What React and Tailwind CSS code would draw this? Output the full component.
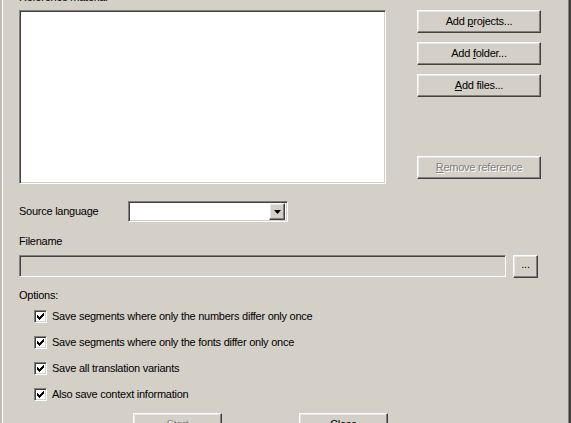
import React from "react"

const raised =
  "border border-t-white border-l-white border-r-[#404040] border-b-[#404040] shadow-[inset_-1px_-1px_0_#808080,inset_1px_1px_0_#e8e6e0] bg-[#d4d0c8]"
const sunken =
  "border border-t-[#808080] border-l-[#808080] border-r-white border-b-white shadow-[inset_1px_1px_0_#404040,inset_-1px_-1px_0_#d4d0c8]"

function Btn({ children, disabled, className = "" }) {
  return (
    <div
      className={`${raised} flex items-center justify-center h-[23px] ${
        disabled ? "text-[#808080] [text-shadow:1px_1px_0_#fff]" : "text-black"
      } ${className}`}
    >
      <span>{children}</span>
    </div>
  )
}

function Check({ label }) {
  return (
    <div className="flex items-center h-[13px]">
      <div className={`${sunken} w-[13px] h-[13px] bg-white flex items-center justify-center`}>
        <svg width="7" height="7" viewBox="0 0 7 7">
          <path d="M0 2h1v1h1v1h1V3h1V2h1V1h1V0h1v3H6v1H5v1H4v1H3v1H2V6H1V5H0z" fill="#000" />
        </svg>
      </div>
      <span className="ml-[5px]">{label}</span>
    </div>
  )
}

export default function App() {
  return (
    <div
      className="w-[571px] h-[423px] overflow-hidden bg-[#d4d0c8] text-[11px] leading-[13px] tracking-[-0.25px] text-black flex"
      style={{ fontFamily: '"Liberation Sans", Arial, sans-serif' }}
    >
      {/* window edge left */}
      <div className="w-[2px] bg-[#bfbcb4]" />
      <div className="w-[1px] bg-white" />

      <div className="flex-1 flex flex-col pl-[16px]">
        <div className="h-[13px] -mt-[9px]">Reference material</div>

        <div className="flex mt-[6px]">
          <div className={`${sunken} w-[367px] h-[174px] bg-white`} />
          <div className="ml-[31px] flex flex-col gap-[9px] w-[124px]">
            <Btn>
              Add <span className="underline underline-offset-1">p</span>rojects...
            </Btn>
            <Btn>
              Add <span className="underline underline-offset-1">f</span>older...
            </Btn>
            <Btn>
              <span className="underline underline-offset-1">A</span>dd files...
            </Btn>
            <Btn disabled className="mt-[50px]">
              <span className="underline underline-offset-1">R</span>emove reference
            </Btn>
          </div>
        </div>

        <div className="flex items-center mt-[17px] h-[21px]">
          <div className="w-[109px]">Source language</div>
          <div className={`${sunken} w-[160px] h-[21px] bg-white flex items-center justify-end pr-[2px]`}>
            <div className={`${raised} w-[16px] h-[17px] flex items-center justify-center`}>
              <svg width="7" height="4" viewBox="0 0 7 4">
                <path d="M0 0h7L3.5 4z" fill="#000" />
              </svg>
            </div>
          </div>
        </div>

        <div className="mt-[13px] h-[13px]">Filename</div>

        <div className="flex mt-[7px]">
          <div className={`${sunken} w-[487px] h-[22px]`} />
          <Btn className="ml-[7px] w-[25px] h-[22px] pb-[4px]">...</Btn>
        </div>

        <div className="mt-[11px] h-[13px]">Options:</div>

        <div className="flex flex-col gap-[13px] mt-[8px] pl-[15px]">
          <Check label="Save segments where only the numbers differ only once" />
          <Check label="Save segments where only the fonts differ only once" />
          <Check label="Save all translation variants" />
          <Check label="Also save context information" />
        </div>

        <div className="flex mt-[12px] pl-[114px]">
          <Btn disabled className="w-[89px]">Start</Btn>
          <Btn className="w-[89px] ml-[77px]">Close</Btn>
        </div>
      </div>

      {/* window edge right */}
      <div className="w-[1px] bg-[#808080]" />
      <div className="w-[2px] bg-[#404040]" />
    </div>
  )
}
